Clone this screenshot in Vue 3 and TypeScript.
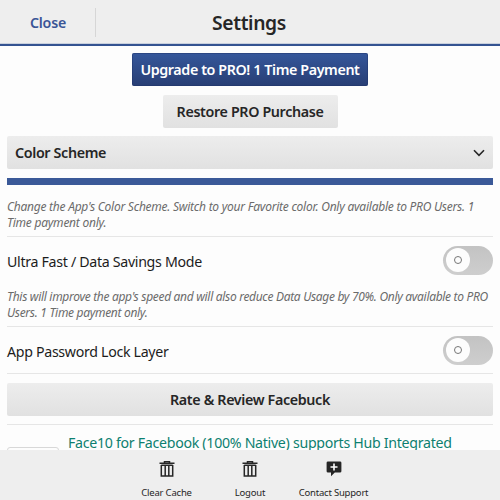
<script setup lang="ts">
import { ref } from 'vue'

interface Toggle {
  label: string
  on: boolean
}

const fast = ref<Toggle>({ label: 'Ultra Fast / Data Savings Mode', on: false })
const lock = ref<Toggle>({ label: 'App Password Lock Layer', on: false })

const actions = [
  { label: 'Clear Cache', icon: 'trash' },
  { label: 'Logout', icon: 'trash' },
  { label: 'Contact Support', icon: 'support' },
]
</script>

<template>
  <div class="screen">
    <header class="header">
      <button class="close">Close</button>
      <h1 class="title">Settings</h1>
    </header>

    <main class="content">
      <button class="btn primary">Upgrade to PRO! 1 Time Payment</button>
      <button class="btn restore">Restore PRO Purchase</button>
      <button class="btn dropdown">
        <span>Color Scheme</span>
        <svg class="chevron" viewBox="0 0 12 8"><path d="M1 1.2 6 6.3 11 1.2" /></svg>
      </button>
      <div class="swatch"></div>
      <p class="hint">
        Change the App's Color Scheme. Switch to your Favorite color. Only available to PRO Users. 1<br />Time payment only.
      </p>

      <section class="row">
        <span class="label">{{ fast.label }}</span>
        <button class="toggle" :class="{ on: fast.on }" @click="fast.on = !fast.on"><i class="knob"></i></button>
      </section>
      <p class="hint second">
        This will improve the app's speed and will also reduce Data Usage by 70%. Only available to PRO<br />Users. 1 Time payment only.
      </p>

      <section class="row lock">
        <span class="label">{{ lock.label }}</span>
        <button class="toggle" :class="{ on: lock.on }" @click="lock.on = !lock.on"><i class="knob"></i></button>
      </section>

      <div class="rate-row">
        <button class="btn rate">Rate &amp; Review Facebuck</button>
      </div>

      <article class="promo">
        <div class="thumb"></div>
        <span class="promo-title">Face10 for Facebook (100% Native) supports Hub Integrated</span>
      </article>
    </main>

    <footer class="footer">
      <button v-for="a in actions" :key="a.label" class="action">
        <svg v-if="a.icon === 'trash'" class="icon" viewBox="0 0 16 16">
          <path class="line" d="M5.5 1.8V.6h5v1.2M.5 2.2h15M2.3 4v11h11.4V4M6.2 4v11M9.8 4v11M2.3 4.3h11.4" />
        </svg>
        <svg v-else class="icon" viewBox="0 0 16 16">
          <path d="M2 .4h12a1.4 1.4 0 0 1 1.4 1.4v8.4a1.4 1.4 0 0 1-1.4 1.4H8.8L5 15.2v-3.6H2A1.4 1.4 0 0 1 .6 10.2V1.8A1.4 1.4 0 0 1 2 .4Z" />
          <path class="plus" d="M8 2.5v7M4.5 6h7" />
        </svg>
        <span>{{ a.label }}</span>
      </button>
    </footer>
  </div>
</template>

<style>
body { margin: 0; background: #fdfdfd; }
</style>

<style scoped>
.screen {
  display: flex;
  flex-direction: column;
  width: 500px;
  height: 500px;
  overflow: hidden;
  background: #fdfdfd;
  color: #262626;
  font-family: "Noto Sans", "Open Sans", sans-serif;
}
button {
  margin: 0;
  padding: 0;
  border: 0;
  background: none;
  color: inherit;
  font-family: inherit;
  white-space: nowrap;
}
.header {
  flex: none;
  display: grid;
  grid-template-columns: 96px 1fr 96px;
  align-items: center;
  box-sizing: border-box;
  height: 46px;
  padding-top: 1px;
  border-bottom: 2px solid #345391;
  box-shadow: inset 0 -1px #c9d0dd;
  background: #eee;
}
.close {
  box-sizing: border-box;
  height: 29px;
  padding-left: 1px;
  border-right: 1px solid #d6d6d6;
  color: #3a5596;
  font-size: 14.2px;
  font-weight: 600;
  letter-spacing: -0.23px;
}
.title {
  margin: 0;
  padding-right: 2px;
  text-align: center;
  font-size: 19.3px;
  font-weight: 600;
  line-height: 24px;
  letter-spacing: -0.37px;
}
.content {
  flex: none;
  display: flex;
  flex-direction: column;
  height: 404px;
  box-sizing: border-box;
  padding: 7px 7px 0;
  overflow: hidden;
}
.btn {
  flex: none;
  height: 33px;
  border-radius: 2px;
  background: linear-gradient(#ededed, #e1e1e1);
  font-size: 14.3px;
  font-weight: 600;
  letter-spacing: -0.36px;
}
.primary {
  align-self: center;
  width: 236px;
  background: linear-gradient(#35579b, #283e74);
  box-shadow: inset 0 0 0 1px rgb(32 52 105 / 45%);
  color: #fff;
  letter-spacing: -0.4px;
}
.restore {
  align-self: center;
  width: 175px;
  margin-top: 9px;
}
.dropdown {
  display: flex;
  align-items: center;
  justify-content: space-between;
  margin-top: 8px;
  padding: 0 8px;
}
.chevron {
  width: 12px;
  height: 8px;
  fill: none;
  stroke: #262626;
  stroke-width: 1.6;
}
.swatch {
  flex: none;
  height: 7px;
  margin-top: 9px;
  background: #3b5998;
}
.hint {
  flex: none;
  box-sizing: border-box;
  height: 52px;
  margin: 0;
  padding-top: 14px;
  border-bottom: 1px solid #e6e6e6;
  color: #6b6b6b;
  font-size: 12px;
  font-style: italic;
  line-height: 16px;
  letter-spacing: -0.245px;
  white-space: nowrap;
}
.row {
  flex: none;
  display: flex;
  align-items: center;
  justify-content: space-between;
  height: 46px;
}
.label {
  color: #1c1c1c;
  font-size: 14.2px;
  letter-spacing: -0.31px;
  transform: translateY(1px);
}
.second {
  height: 44px;
  padding-top: 6px;
  letter-spacing: -0.31px;
}
.toggle {
  display: flex;
  align-items: center;
  width: 50px;
  height: 29px;
  padding: 0 3px;
  border-radius: 15px;
  background: linear-gradient(#c3c3c3, #cecece);
}
.toggle.on {
  justify-content: flex-end;
  background: #3b5998;
}
.knob {
  display: grid;
  place-items: center;
  width: 24px;
  height: 24px;
  border-radius: 50%;
  background: #fdfdfd;
}
.knob::after {
  content: "";
  box-sizing: border-box;
  width: 8px;
  height: 8px;
  border: 1px solid #777;
  border-radius: 50%;
}
.rate-row {
  flex: none;
  box-sizing: border-box;
  height: 52px;
  padding-top: 9px;
  border-top: 1px solid #e6e6e6;
  border-bottom: 1px solid #e6e6e6;
}
.rate {
  width: 100%;
}
.promo {
  flex: none;
  display: flex;
  gap: 9px;
}
.thumb {
  box-sizing: border-box;
  width: 52px;
  height: 52px;
  margin-top: 22px;
  border: 1px solid #d8d8d8;
  border-radius: 3px;
}
.promo-title {
  padding-top: 8px;
  color: #0d8070;
  font-size: 14.2px;
  line-height: 20px;
  letter-spacing: -0.3px;
  white-space: nowrap;
}
.footer {
  flex: 1;
  display: grid;
  grid-template-columns: repeat(3, 83.5px);
  justify-content: center;
  background: #eee;
}
.action {
  display: flex;
  flex-direction: column;
  align-items: center;
  padding-top: 11px;
  font-size: 9.5px;
  line-height: 12px;
  letter-spacing: -0.2px;
}
.icon {
  width: 16px;
  height: 16px;
  margin-bottom: 10px;
  fill: #262626;
}
.line {
  fill: none;
  stroke: #262626;
  stroke-width: 1.5;
}
.plus {
  fill: none;
  stroke: #fff;
  stroke-width: 1.6;
}
</style>
